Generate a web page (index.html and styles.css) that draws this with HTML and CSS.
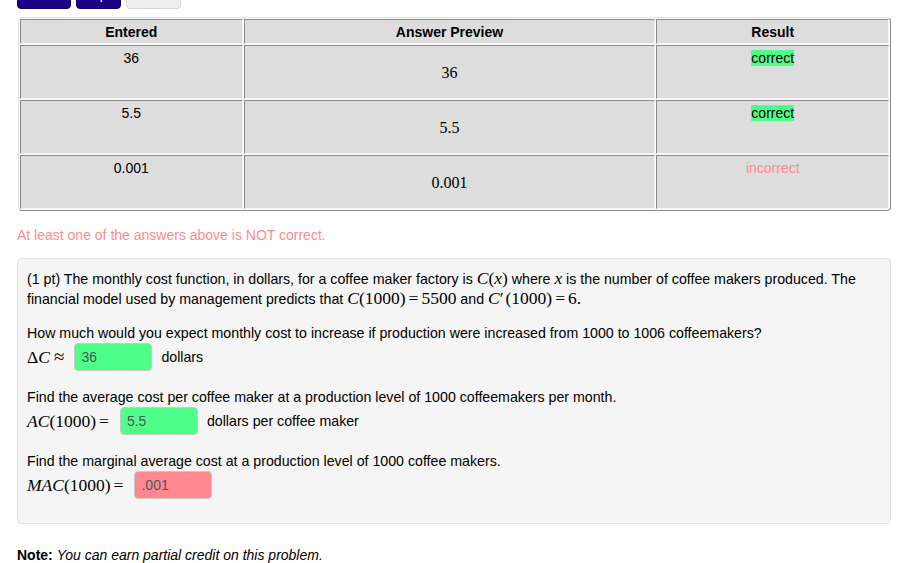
FILE: index.html
```html
<!DOCTYPE html>
<html>
<head>
<meta charset="utf-8">
<link rel="stylesheet" href="styles.css">
</head>
<body>
<div class="page">
  <div class="buttons">
    <button class="btn btn-primary w1">Prev</button>
    <button class="btn btn-primary w2">Up</button>
    <button class="btn btn-light w3">Next</button>
  </div>

  <table class="attempts">
    <tr class="head">
      <th class="c1">Entered</th>
      <th class="c2">Answer Preview</th>
      <th class="c3">Result</th>
    </tr>
    <tr class="row">
      <td>36</td>
      <td class="preview">36</td>
      <td><span class="ok">correct</span></td>
    </tr>
    <tr class="row">
      <td>5.5</td>
      <td class="preview">5.5</td>
      <td><span class="ok">correct</span></td>
    </tr>
    <tr class="row">
      <td>0.001</td>
      <td class="preview">0.001</td>
      <td><span class="bad">incorrect</span></td>
    </tr>
  </table>

  <div class="warn">At least one of the answers above is NOT correct.</div>

  <div class="problem">
    <p class="para">(1 pt) The monthly cost function, in dollars, for a coffee maker factory is <span class="m"><i>C</i>(<i>x</i>)</span> where <span class="m"><i>x</i></span> is the number of coffee makers produced. The financial model used by management predicts that <span class="m"><i>C</i>(1000)<span class="rel">=</span>5500</span> and <span class="m"><i>C</i>′<span class="thin"></span>(1000)<span class="rel">=</span>6.</span></p>

    <p class="q">How much would you expect monthly cost to increase if production were increased from 1000 to 1006 coffeemakers?</p>
    <div class="ans"><span class="m">Δ<i>C</i><span class="approx">≈</span></span><span class="inp good">36</span><span>dollars</span></div>

    <p class="q">Find the average cost per coffee maker at a production level of 1000 coffeemakers per month.</p>
    <div class="ans"><span class="m"><i>AC</i>(1000)<span class="rel">=</span></span><span class="inp good">5.5</span><span>dollars per coffee maker</span></div>

    <p class="q">Find the marginal average cost at a production level of 1000 coffee makers.</p>
    <div class="ans last"><span class="m"><i>MAC</i>(1000)<span class="rel">=</span></span><span class="inp wrong">.001</span></div>
  </div>

  <p class="note"><b>Note:</b> <i>You can earn partial credit on this problem.</i></p>
</div>
</body>
</html>
```

FILE: styles.css
```css
html, body {
  margin: 0;
  padding: 0;
  background: #fff;
}
body {
  font-family: "Liberation Sans", Arial, Helvetica, sans-serif;
  font-size: 14px;
  color: #000;
}
.page {
  padding: 0 28px 0 17px;
}
.buttons {
  display: flex;
  gap: 5px;
  margin-top: -21px;
  height: 30px;
}
.btn {
  height: 30px;
  border-radius: 4px;
  font-family: "Liberation Sans", Arial, sans-serif;
  font-size: 14px;
  padding: 0;
}
.btn-primary {
  background: #1d0088;
  border: 1px solid #160066;
  color: #fff;
}
.btn-light {
  background: #eeeeee;
  border: 1px solid #d6d6d6;
  color: #fff;
}
.w1 { width: 54px; }
.w2 { width: 45px; }
.w3 { width: 55px; }

.attempts {
  margin: 8px 0 0 1px;
  width: 873px;
  border-collapse: separate;
  border-spacing: 1px;
  border: 1px solid;
  border-color: #e2e2e2 #8a8a8a #8a8a8a #e2e2e2;
  border-radius: 4px;
  background: #fff;
}
.attempts th, .attempts td {
  background: #dddddd;
  border: 1px solid;
  border-color: #8a8a8a #f4f4f4 #f4f4f4 #8a8a8a;
  text-align: center;
  padding: 0;
}
.attempts th {
  height: 23px;
  font-weight: bold;
  font-size: 14px;
}
.c1 { width: 221px; }
.c2 { width: 411px; }
.c3 { width: 231px; }
.row td {
  height: 54px;
  vertical-align: top;
  padding-top: 4px;
  box-sizing: border-box;
  line-height: 16px;
}
.row td.preview {
  vertical-align: middle;
  padding-top: 2px;
  font-family: "Liberation Serif", "Times New Roman", serif;
  font-size: 16px;
}
.ok {
  background: #4dff88;
}
.bad {
  color: #ff8a8e;
}

.warn {
  margin-top: 16px;
  color: #ff8a8e;
  line-height: 16px;
}

.problem {
  margin-top: 15px;
  background: #f5f5f5;
  border: 1px solid #e3e3e3;
  border-radius: 4px;
  padding: 10px 9px 9px 9px;
  line-height: 20px;
  font-size: 14.2px;
}
.para {
  margin: 0 0 14px;
}
.q {
  margin: 0;
}
.m {
  font-family: "Liberation Serif", "Times New Roman", serif;
  font-size: 17.5px;
  line-height: 18px;
}
.m i {
  font-style: italic;
}
.rel {
  margin: 0 3px;
}
.approx {
  margin: 0 2px 0 4px;
  font-size: 19px;
}
.thin {
  display: inline-block;
  width: 2px;
}
.ans {
  display: flex;
  align-items: center;
  height: 28px;
  margin: 0 0 16px;
}
.ans.last {
  margin-bottom: 15px;
}
.inp {
  display: inline-block;
  box-sizing: border-box;
  width: 78px;
  height: 28px;
  line-height: 26px;
  border: 1px solid #c9c9c9;
  border-radius: 4px;
  padding: 0 6px;
  margin: 0 9px 0 8px;
  color: #555;
  font-size: 14px;
}
.good {
  background: #4dff88;
}
.wrong {
  background: #ff8891;
}

.note {
  margin: 23px 0 0;
  line-height: 16px;
}
```
